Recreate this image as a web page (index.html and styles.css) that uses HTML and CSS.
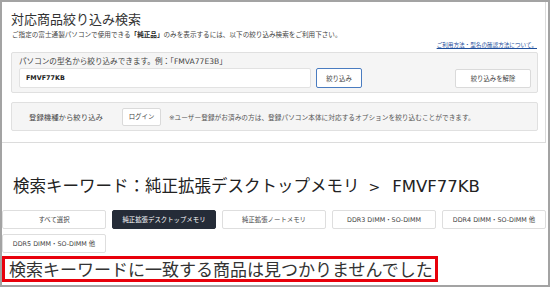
FILE: index.html
```html
<!DOCTYPE html>
<html lang="ja">
<head>
    <meta charset="utf-8">
    <title>対応商品絞り込み検索</title>
    <link rel="stylesheet" href="styles.css">
</head>
<body>

<div class="frame">
    <div class="search-box">
        <h1 class="search-title">対応商品絞り込み検索</h1>
        <p class="search-lead">ご指定の富士通製パソコンで使用できる<strong>「純正品」</strong>のみを表示するには、以下の絞り込み検索をご利用下さい。</p>
        <div class="help-link"><a href="#">ご利用方法・型名の確認方法について。</a></div>

        <div class="panel panel-model">
            <div class="panel-label">パソコンの型名から絞り込みできます。例：「FMVA77E3B」</div>
            <div class="model-row">
                <input type="text" class="model-input" value="FMVF77KB">
                <button class="btn btn-search">絞り込み</button>
                <button class="btn btn-clear">絞り込みを解除</button>
            </div>
        </div>

        <div class="panel panel-login">
            <span class="login-label">登録機種から絞り込み</span>
            <button class="btn btn-login">ログイン</button>
            <span class="login-note">※ユーザー登録がお済みの方は、登録パソコン本体に対応するオプションを絞り込むことができます。</span>
        </div>
    </div>

    <h2 class="result-title">検索キーワード：純正拡張デスクトップメモリ<span class="sep">&gt;</span><span class="kw">FMVF77KB</span></h2>

    <div class="category-list">
        <button class="cat">すべて選択</button>
        <button class="cat active">純正拡張デスクトップメモリ</button>
        <button class="cat">純正拡張ノートメモリ</button>
        <button class="cat">DDR3 DIMM・SO-DIMM</button>
        <button class="cat">DDR4 DIMM・SO-DIMM 他</button>
        <button class="cat">DDR5 DIMM・SO-DIMM 他</button>
    </div>

    <div class="no-result">検索キーワードに一致する商品は見つかりませんでした</div>
</div>

</body>
</html>
```

FILE: styles.css
```css
* {
    box-sizing: border-box;
}

body {
    margin: 0;
    font-family: "DejaVu Sans", "Noto Sans CJK JP", sans-serif;
    color: #333;
    background-color: #fff;
}

.frame {
    width: 550px;
    height: 287px;
    border: 2px solid #a3a3a3;
    overflow: hidden;
    background-color: #fff;
}

/* 上部の検索ボックス */
.search-box {
    width: 544px;
    height: 141px;
    border-right: 1px solid #dcdcdc;
    border-bottom: 1px solid #dcdcdc;
    padding: 7px 7px 0 9px;
}

.search-title {
    margin: 0;
    font-family: "Noto Sans CJK JP", sans-serif;
    font-size: 13px;
    font-weight: normal;
    line-height: 19px;
    color: #333;
}

.search-lead {
    margin: 3px 0 0 1px;
    font-size: 6.6px;
    line-height: 9px;
    color: #444;
}

.search-lead strong {
    font-weight: bold;
    color: #222;
}

.help-link {
    text-align: right;
    font-size: 5.6px;
    line-height: 8px;
    margin-top: 1px;
    padding-right: 1px;
}

.help-link a {
    color: #1f4f9c;
}

.panel {
    background-color: #f5f5f5;
    border: 1px solid #e0e0e0;
    border-radius: 2px;
}

.panel-model {
    margin-top: 3px;
    height: 41px;
    padding: 3px 6px 0 7px;
}

.panel-label {
    font-size: 7.6px;
    line-height: 11px;
    color: #444;
}

.model-row {
    display: flex;
    align-items: center;
    margin-top: 1px;
}

.model-input {
    width: 292px;
    height: 20px;
    border: 1px solid #e2e2e2;
    border-radius: 2px;
    background-color: #fff;
    padding: 0 6px;
    font-family: inherit;
    font-size: 6.4px;
    font-weight: bold;
    color: #222;
}

.btn {
    font-family: inherit;
    background-color: #fff;
    border: 1px solid #dadada;
    border-radius: 2px;
    color: #444;
    padding: 0;
    cursor: pointer;
}

.btn-search {
    width: 46px;
    height: 20px;
    margin-left: 5px;
    font-size: 6.4px;
    border: 1.5px solid #4a7cc0;
}

.btn-clear {
    width: 76px;
    height: 19px;
    margin-left: auto;
    font-size: 6.4px;
}

.panel-login {
    margin-top: 9px;
    height: 29px;
    display: flex;
    align-items: center;
    padding-left: 17px;
}

.login-label {
    font-size: 7.4px;
    color: #444;
    width: 93px;
}

.btn-login {
    width: 39px;
    height: 18px;
    font-size: 6.4px;
}

.login-note {
    margin-left: 8px;
    font-size: 6.7px;
    color: #555;
}

/* 検索結果 */
.result-title {
    margin: 31px 0 0 11px;
    font-family: "Noto Sans CJK JP", sans-serif;
    font-size: 16.5px;
    font-weight: normal;
    line-height: 22px;
    color: #222;
}

.result-title .sep {
    font-family: "DejaVu Sans", sans-serif;
    font-size: 14px;
    margin: 0 12px 0 9px;
}

.result-title .kw {
    font-family: "DejaVu Sans", sans-serif;
    font-size: 16.5px;
}

.category-list {
    display: flex;
    flex-wrap: wrap;
    gap: 5px 6px;
    margin-top: 12px;
    width: 546px;
}

.cat {
    width: 104px;
    height: 19px;
    background-color: #fff;
    border: 1px solid #dedede;
    border-radius: 2px;
    font-family: inherit;
    font-size: 6.4px;
    color: #444;
    padding: 0;
}

.cat.active {
    background-color: #252c38;
    border-color: #252c38;
    color: #fff;
}

.no-result {
    width: 436px;
    height: 26px;
    margin-top: 3px;
    border: 3px solid #e8000b;
    padding-left: 4px;
    font-family: "Noto Sans CJK JP", sans-serif;
    font-size: 17px;
    line-height: 19px;
    color: #333;
    white-space: nowrap;
}
```
